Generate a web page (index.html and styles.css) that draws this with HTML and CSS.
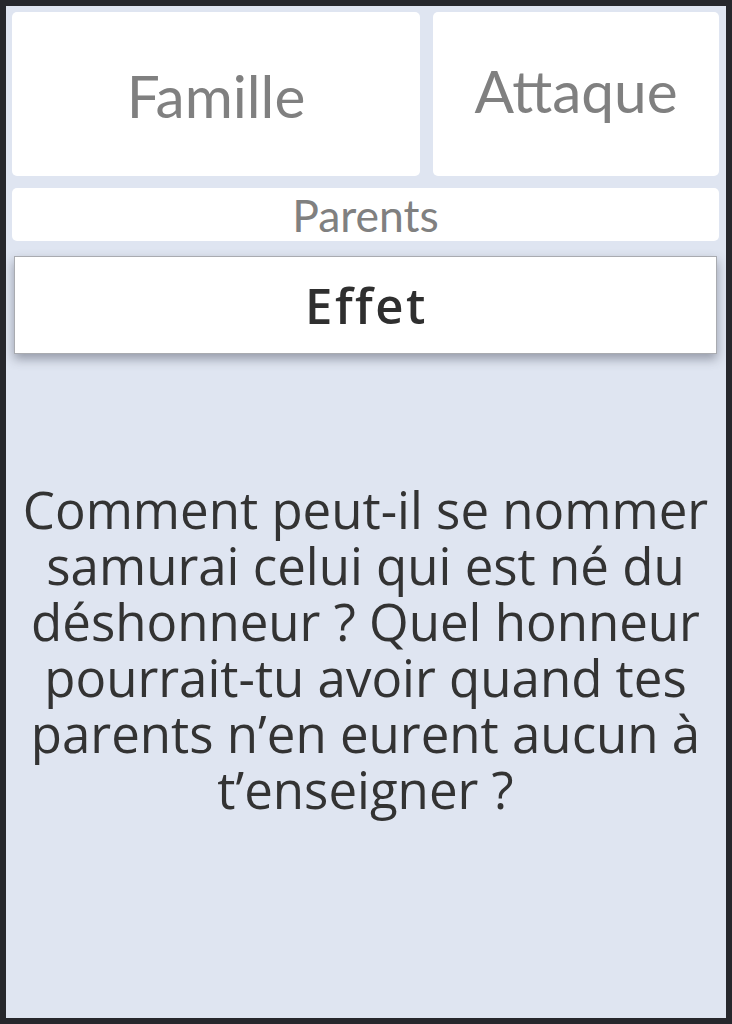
FILE: index.html
```html
<!DOCTYPE html>
<html lang="fr">
<head>
<meta charset="utf-8">
<link rel="stylesheet" href="styles.css">
</head>
<body>
<div class="screen">
  <div class="top-row">
    <div class="card card-famille">Famille</div>
    <div class="card card-attaque">Attaque</div>
  </div>
  <div class="parents">Parents</div>
  <div class="effet">Effet</div>
  <div class="quote">Comment peut-il se nommer samurai celui qui est né du déshonneur ? Quel honneur pourrait-tu avoir quand tes parents n’en eurent aucun à t’enseigner ?</div>
</div>
</body>
</html>
```
FILE: styles.css
```css
html, body {
  margin: 0;
  padding: 0;
  background: #26272c;
}
body {
  padding: 6px;
  width: 732px;
  height: 1024px;
  box-sizing: border-box;
}
.screen {
  width: 720px;
  height: 1012px;
  background: #dfe5f1;
  box-sizing: border-box;
  padding: 6px 7px 0 6px;
  display: flex;
  flex-direction: column;
  overflow: hidden;
}
.top-row {
  display: flex;
  gap: 13px;
  height: 164px;
}
.card {
  background: #fff;
  border-radius: 5px;
  display: flex;
  align-items: center;
  justify-content: center;
  font-family: Lato, "Liberation Sans", sans-serif;
  font-size: 58.5px;
  color: #808080;
}
.card-famille {
  width: 408px;
  padding-top: 2px;
  box-sizing: border-box;
}
.card-attaque {
  flex: 1;
  padding-bottom: 8px;
}
.parents {
  margin-top: 12px;
  height: 53px;
  background: #fff;
  border-radius: 5px;
  display: flex;
  align-items: center;
  justify-content: center;
  font-family: Lato, "Liberation Sans", sans-serif;
  font-size: 44.5px;
  color: #808080;
}
.effet {
  margin: 15px 2px 0 2px;
  height: 98px;
  background: #fff;
  box-sizing: border-box;
  border: 1px solid #a9abb0;
  box-shadow: 0 5px 10px rgba(60, 65, 80, 0.45);
  display: flex;
  align-items: center;
  justify-content: center;
  padding-left: 2px;
  font-family: "Open Sans", "Noto Sans", sans-serif;
  font-weight: 600;
  font-size: 49px;
  letter-spacing: 2.5px;
  color: #2f2f2f;
}
.quote {
  padding: 127px 0 0 0;
  text-align: center;
  font-family: "Open Sans", "Noto Sans", sans-serif;
  font-size: 51px;
  line-height: 56px;
  color: #333333;
}
```
